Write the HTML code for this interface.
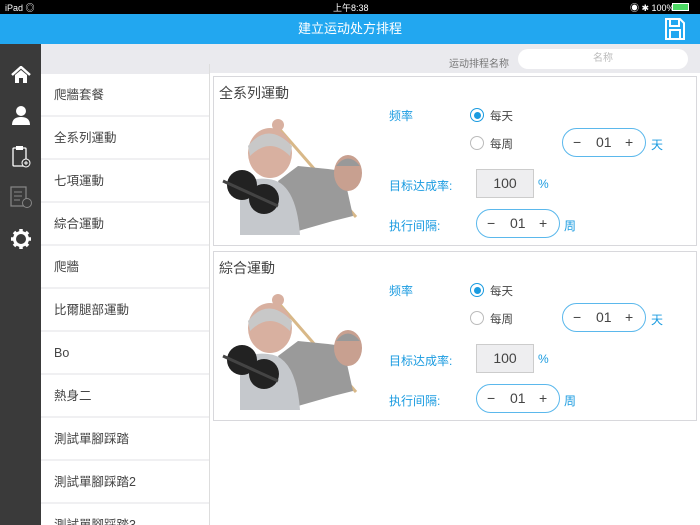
<!DOCTYPE html>
<html style="overflow:hidden;width:700px;height:525px"><head><meta charset="utf-8"><style>
*{margin:0;padding:0;box-sizing:border-box}
body{width:700px;height:525px;overflow:hidden;background:#eaeaee;font-family:"Liberation Sans","Noto Sans CJK SC",sans-serif;position:relative}
.abs{position:absolute}
.status{left:0;top:0;width:700px;height:14px;background:#000;color:#fff;font-size:9px}
.hdr{left:0;top:14px;width:700px;height:30px;background:#22a7f0;color:#fff;font-size:13px;text-align:center;line-height:30px}
.side{left:0;top:44px;width:41px;height:481px;background:#3a3a3a}
.list{left:41px;top:74px;width:168px;height:451px;background:#f4f4f6;overflow:hidden}
.item{height:43px;background:#fff;border-bottom:2px solid #f0f0f2;font-size:12.5px;color:#444;line-height:43px;padding-left:13px}
.card{left:213px;width:484px;height:170px;background:#fff;border:1px solid #d8d8dc}
.t{font-size:14px;color:#444;position:absolute;left:5px;top:6px}
.lb{position:absolute;color:#1a9be0;font-size:12px}
.r{position:absolute;font-size:11.5px;color:#444}
.rad{position:absolute;width:14px;height:14px;border-radius:50%;border:1px solid #bbb;background:#fff}
.rad.on{border-color:#1a9be0}
.rad.on:after{content:"";position:absolute;left:2.5px;top:2.5px;width:7px;height:7px;border-radius:50%;background:#1a9be0}
.st{position:absolute;width:84px;height:29px;border:1px solid #5bb8ec;border-radius:15px;font-size:14px;color:#444}
.st span{position:absolute;top:5px}
.box{position:absolute;width:58px;height:29px;background:#eeeef0;border:1px solid #ccc;text-align:center;line-height:27px;font-size:14px;color:#444}
</style></head><body>
<div class="abs status"><span class="abs" style="left:5px;top:1px">iPad ◎</span><span class="abs" style="left:333px;top:1px">上午8:38</span><span class="abs" style="left:630px;top:1px">◉ ✱ 100%</span><span class="abs" style="left:672px;top:3px;width:17px;height:8px;background:#4cd964;border:1px solid #fff"></span></div>
<div class="abs hdr">建立运动处方排程</div>
<svg class="abs" style="left:664px;top:17px" width="22" height="24" viewBox="0 0 22 24"><path d="M2 2H16L20 6V22H2Z" fill="none" stroke="#fff" stroke-width="2"/><rect x="6" y="2" width="9" height="7" fill="none" stroke="#fff" stroke-width="2"/><rect x="6" y="13" width="10" height="9" fill="none" stroke="#fff" stroke-width="2"/></svg>
<div class="abs side">
<svg class="abs" style="left:11px;top:22px" width="20" height="18" viewBox="0 0 20 18"><path d="M1 9L10 1L19 9" stroke="#fff" stroke-width="2.5" fill="none"/><path d="M4 9V17H8V12H12V17H16V9L10 4Z" fill="#fff"/></svg>
<svg class="abs" style="left:11px;top:61px" width="20" height="20" viewBox="0 0 20 20"><circle cx="10" cy="6" r="5" fill="#fff"/><path d="M1 20Q1 12 10 12Q19 12 19 20Z" fill="#fff"/></svg>
<svg class="abs" style="left:11px;top:100px" width="20" height="24" viewBox="0 0 20 24"><rect x="2" y="4" width="13" height="18" rx="1" fill="none" stroke="#fff" stroke-width="1.3"/><rect x="5" y="2" width="7" height="4" fill="#fff"/><circle cx="15" cy="19" r="4" fill="#3a3a3a" stroke="#fff"/><path d="M15 17V21M13 19H17" stroke="#fff"/></svg>
<svg class="abs" style="left:10px;top:142px" width="22" height="22" viewBox="0 0 22 22"><rect x="1" y="1" width="15" height="19" fill="none" stroke="#888" stroke-width="1.2"/><path d="M4 6H12M4 10H12M4 14H10" stroke="#888"/><circle cx="17" cy="17" r="4.5" fill="#3a3a3a" stroke="#888"/></svg>
<svg class="abs" style="left:11px;top:185px" width="20" height="20" viewBox="0 0 20 20"><circle cx="10" cy="10" r="6.5" fill="none" stroke="#fff" stroke-width="3"/><path d="M10 0V4M10 16V20M0 10H4M16 10H20M3 3L6 6M14 14L17 17M17 3L14 6M3 17L6 14" stroke="#fff" stroke-width="3.5"/></svg>
</div>
<div class="abs list">
<div class="item">爬牆套餐</div><div class="item">全系列運動</div><div class="item">七項運動</div><div class="item">綜合運動</div><div class="item">爬牆</div><div class="item">比爾腿部運動</div><div class="item">Bo</div><div class="item">熱身二</div><div class="item">測試單腳踩踏</div><div class="item">測試單腳踩踏2</div><div class="item">測試單腳踩踏3</div>
</div>
<div class="abs" style="left:210px;top:73px;width:490px;height:452px;background:#fff"></div>
<div class="abs" style="left:209px;top:64px;width:1px;height:461px;background:#ddd"></div>
<span class="abs" style="left:449px;top:55px;font-size:10px;color:#777">运动排程名称</span>
<div class="abs" style="left:518px;top:49px;width:170px;height:20px;background:#fff;border-radius:10px;text-align:center;font-size:10px;color:#bbb;line-height:20px">名称</div>

<div class="abs card" style="top:76px"><div class="t">全系列運動</div>
<svg style="position:absolute;left:4px;top:34px" width="166" height="124" viewBox="0 0 166 124"><path d="M58 14L138 106" stroke="#d8b888" stroke-width="3"/><path d="M60 70L80 55L110 58L125 60L135 105L115 110L80 120Z" fill="#9a9a9a"/><ellipse cx="130" cy="62" rx="14" ry="18" fill="#c8a090"/><path d="M118 55Q130 40 142 55" fill="#999"/><ellipse cx="52" cy="42" rx="22" ry="25" fill="#d8b0a0"/><path d="M30 35Q50 10 74 35L72 45Q52 25 32 45Z" fill="#c8c8c8"/><path d="M22 85Q25 65 50 68Q78 70 82 124H22Z" fill="#c5c8cc"/><circle cx="24" cy="74" r="15" fill="#222"/><circle cx="46" cy="88" r="15" fill="#222"/><path d="M5 70L60 95" stroke="#444" stroke-width="3"/><circle cx="60" cy="14" r="6" fill="#d8b0a0"/></svg>
<span class="lb" style="left:175px;top:30px">频率</span>
<div class="rad on" style="left:256px;top:31px"></div><span class="r" style="left:276px;top:31px">每天</span>
<div class="rad" style="left:256px;top:59px"></div><span class="r" style="left:276px;top:59px">每周</span>
<div class="st" style="left:348px;top:51px"><span style="left:10px">−</span><span style="left:33px">01</span><span style="left:62px">+</span></div><span class="lb" style="left:437px;top:59px">天</span>
<span class="lb" style="left:175px;top:100px">目标达成率:</span>
<div class="box" style="left:262px;top:92px">100</div><span class="lb" style="left:324px;top:100px">%</span>
<span class="lb" style="left:175px;top:140px">执行间隔:</span>
<div class="st" style="left:262px;top:132px"><span style="left:10px">−</span><span style="left:33px">01</span><span style="left:62px">+</span></div><span class="lb" style="left:350px;top:140px">周</span>
</div>

<div class="abs card" style="top:251px"><div class="t">綜合運動</div>
<svg style="position:absolute;left:4px;top:34px" width="166" height="124" viewBox="0 0 166 124"><path d="M58 14L138 106" stroke="#d8b888" stroke-width="3"/><path d="M60 70L80 55L110 58L125 60L135 105L115 110L80 120Z" fill="#9a9a9a"/><ellipse cx="130" cy="62" rx="14" ry="18" fill="#c8a090"/><path d="M118 55Q130 40 142 55" fill="#999"/><ellipse cx="52" cy="42" rx="22" ry="25" fill="#d8b0a0"/><path d="M30 35Q50 10 74 35L72 45Q52 25 32 45Z" fill="#c8c8c8"/><path d="M22 85Q25 65 50 68Q78 70 82 124H22Z" fill="#c5c8cc"/><circle cx="24" cy="74" r="15" fill="#222"/><circle cx="46" cy="88" r="15" fill="#222"/><path d="M5 70L60 95" stroke="#444" stroke-width="3"/><circle cx="60" cy="14" r="6" fill="#d8b0a0"/></svg>
<span class="lb" style="left:175px;top:30px">频率</span>
<div class="rad on" style="left:256px;top:31px"></div><span class="r" style="left:276px;top:31px">每天</span>
<div class="rad" style="left:256px;top:59px"></div><span class="r" style="left:276px;top:59px">每周</span>
<div class="st" style="left:348px;top:51px"><span style="left:10px">−</span><span style="left:33px">01</span><span style="left:62px">+</span></div><span class="lb" style="left:437px;top:59px">天</span>
<span class="lb" style="left:175px;top:100px">目标达成率:</span>
<div class="box" style="left:262px;top:92px">100</div><span class="lb" style="left:324px;top:100px">%</span>
<span class="lb" style="left:175px;top:140px">执行间隔:</span>
<div class="st" style="left:262px;top:132px"><span style="left:10px">−</span><span style="left:33px">01</span><span style="left:62px">+</span></div><span class="lb" style="left:350px;top:140px">周</span>
</div>
</body></html>
